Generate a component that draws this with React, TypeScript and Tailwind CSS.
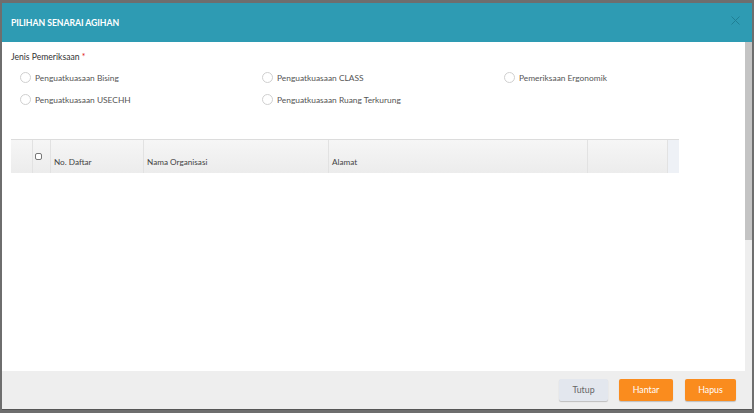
import React from "react";

const Radio = ({ label }: { label: string }) => (
  <label className="flex items-center gap-[4px] h-[22px]">
    <span className="w-[11px] h-[11px] rounded-full border border-[#d0d0d0] bg-white shrink-0" />
    <span className="text-[8.4px] text-[#555]">{label}</span>
  </label>
);

export default function App() {
  return (
    <div
      className="w-[754px] h-[413px] bg-[#6e6e6e] pt-[3px] pl-[2px] overflow-hidden"
      style={{ fontFamily: "Lato, 'Open Sans', sans-serif" }}
    >
      <div className="w-[750px] h-[407px] flex flex-col bg-white border-b border-[#555]">
        <div className="h-[39px] shrink-0 bg-[#2e9bb3] flex items-center justify-between pl-[9px] pr-[12px]">
          <span className="text-white font-bold text-[8.7px] tracking-[-0.05px] whitespace-nowrap">
            PILIHAN SENARAI AGIHAN
          </span>
          <svg width="9" height="9" viewBox="0 0 9 9" className="mb-[5px]">
            <path d="M0.5 0.5L8.5 8.5M8.5 0.5L0.5 8.5" stroke="#1f7f94" strokeWidth="1" />
          </svg>
        </div>
        <div className="flex-1 flex min-h-0">
          <div className="flex-1 pl-[9px] pt-[9px]">
            <div className="text-[8.6px] text-[#333]">
              Jenis Pemeriksaan <span className="text-[#e02020]">*</span>
            </div>
            <div className="grid grid-cols-[242px_242px_200px] pl-[9px] mt-[3px]">
              <Radio label="Penguatkuasaan Bising" />
              <Radio label="Penguatkuasaan CLASS" />
              <Radio label="Pemeriksaan Ergonomik" />
              <Radio label="Penguatkuasaan USECHH" />
              <Radio label="Penguatkuasaan Ruang Terkurung" />
            </div>
            <div className="mt-[28px] w-[668px] h-[34px] flex border-t-[1.5px] border-[#dcdcdc] bg-gradient-to-b from-[#f6f6f6] to-[#ececec] text-[8.2px] text-[#444]">
              <div className="w-[22px] border-r border-[#e2e2e2]" />
              <div className="w-[18px] border-r border-[#e2e2e2] flex pl-[2px] pt-[13px]">
                <span className="w-[7px] h-[7px] border border-[#777] rounded-[2px] bg-white" />
              </div>
              <div className="w-[93px] border-r border-[#e2e2e2] pl-[3px] pt-[16px]">No. Daftar</div>
              <div className="w-[185px] border-r border-[#e2e2e2] pl-[3px] pt-[16px]">Nama Organisasi</div>
              <div className="w-[259px] border-r border-[#e2e2e2] pl-[3px] pt-[16px]">Alamat</div>
              <div className="w-[80px] border-r border-[#e2e2e2]" />
              <div className="flex-1 bg-[#eef1f6]" />
            </div>
          </div>
          <div className="w-[7px] bg-[#eeeeee] flex flex-col">
            <div className="h-[198px] bg-[#c4c4c4]" />
          </div>
        </div>
        <div className="h-[38px] shrink-0 bg-[#eeeeee] flex items-center justify-end pr-[16px]">
          <button className="w-[49px] h-[22px] rounded-[2px] bg-[#e3e7ee] text-[#666] text-[8.8px] shadow-[0_1px_1px_rgba(0,0,0,0.2)]">
            Tutup
          </button>
          <button className="ml-[11px] w-[54px] h-[22px] rounded-[2px] bg-[#fa8c1e] text-white text-[8.8px] shadow-[0_1px_1px_rgba(0,0,0,0.2)]">
            Hantar
          </button>
          <button className="ml-[12px] w-[51px] h-[22px] rounded-[2px] bg-[#fa8c1e] text-white text-[8.8px] shadow-[0_1px_1px_rgba(0,0,0,0.2)]">
            Hapus
          </button>
        </div>
      </div>
    </div>
  );
}
